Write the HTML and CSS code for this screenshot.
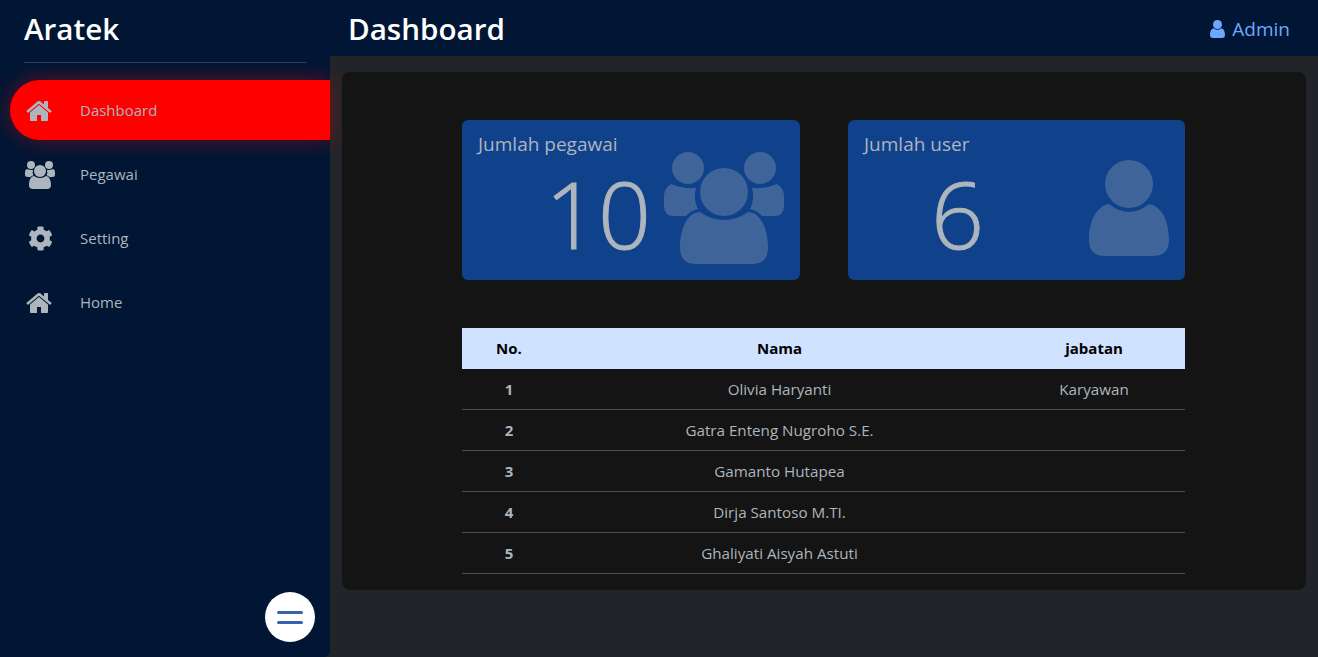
FILE: index.html

```html
<!DOCTYPE html>
<html>
<head>
    <title>Dashboard</title>
    <link rel="stylesheet" href="styles.css">
</head>
<body>
    <svg class="sprite" aria-hidden="true">
        <symbol id="i-home" viewBox="0 0 1792 1792">
            <path d="M1408 992v480q0 26-19 45t-45 19h-384v-384h-256v384h-384q-26 0-45-19t-19-45v-480q0-1 .5-3t.5-3l575-474 575 474q1 2 1 6zm223-69l-62 74q-8 9-21 11h-3q-13 0-21-7l-692-577-692 577q-12 8-24 7-13-2-21-11l-62-74q-8-10-7-23.500t11-21.500l719-599q32-26 76-26t76 26l244 204v-195q0-14 9-23t23-9h192q14 0 23 9t9 23v408l219 182q10 8 11 21.500t-7 23.500z"/>
        </symbol>
        <symbol id="i-cog" viewBox="0 0 512 512">
            <path d="M487.400 315.700l-42.600-24.600c4.300-23.200 4.300-47 0-70.200l42.600-24.600c4.900-2.800 7.100-8.600 5.500-14-11.100-35.600-30-67.800-54.700-94.600-3.800-4.100-10-5.100-14.800-2.300L380.800 110c-17.900-15.400-38.500-27.300-60.800-35.100V25.800c0-5.600-3.900-10.500-9.400-11.700-36.700-8.200-74.300-7.800-109.200 0-5.500 1.200-9.400 6.100-9.400 11.700V75c-22.200 7.900-42.800 19.800-60.800 35.100L88.700 85.500c-4.900-2.800-11-1.900-14.800 2.300-24.700 26.700-43.600 58.900-54.700 94.600-1.700 5.400.6 11.200 5.500 14L67.300 221c-4.300 23.200-4.300 47 0 70.200l-42.600 24.600c-4.900 2.800-7.100 8.600-5.500 14 11.100 35.600 30 67.800 54.700 94.600 3.800 4.100 10 5.100 14.800 2.300l42.600-24.600c17.900 15.400 38.500 27.300 60.800 35.100v49.200c0 5.600 3.900 10.500 9.400 11.700 36.700 8.200 74.300 7.800 109.200 0 5.500-1.200 9.400-6.100 9.400-11.700v-49.200c22.200-7.900 42.800-19.800 60.800-35.100l42.600 24.600c4.900 2.800 11 1.900 14.800-2.300 24.700-26.700 43.600-58.900 54.700-94.600 1.500-5.500-.7-11.300-5.600-14.100zM256 336c-44.100 0-80-35.900-80-80s35.900-80 80-80 80 35.900 80 80-35.900 80-80 80z"/>
        </symbol>
        <symbol id="i-users" viewBox="0 0 120 112">
            <circle cx="24" cy="16" r="16"/>
            <circle cx="96" cy="16" r="16"/>
            <circle cx="60" cy="40" r="24"/>
            <path d="M7 32Q18 37 32 36A28 28 0 0 0 34 57Q26 59 22 64L10 64Q0 64 0 54L0 44Q0 36 7 32Z"/>
            <path d="M113 32Q102 37 88 36A28 28 0 0 1 86 57Q94 59 98 64L110 64Q120 64 120 54L120 44Q120 36 113 32Z"/>
            <path d="M36 60Q47 68 60 68Q73 68 84 60C96 60 104 76 104 96Q104 112 88 112L32 112Q16 112 16 96C16 76 24 60 36 60Z"/>
        </symbol>
        <symbol id="i-user" viewBox="0 0 80 96">
            <circle cx="40" cy="24" r="24"/>
            <path d="M20 44Q30 52 40 52Q50 52 60 44C72 46 80 60 80 80Q80 96 64 96L16 96Q0 96 0 80C0 60 8 46 20 44Z"/>
        </symbol>
    </svg>

    <aside class="sidebar">
        <div class="brand">Aratek</div>
        <ul class="menu">
            <li class="menu-item active">
                <span class="menu-icon"><svg class="ic-home"><use href="#i-home"/></svg></span>
                <span>Dashboard</span>
            </li>
            <li class="menu-item">
                <span class="menu-icon"><svg class="ic-users"><use href="#i-users"/></svg></span>
                <span>Pegawai</span>
            </li>
            <li class="menu-item">
                <span class="menu-icon"><svg class="ic-cog"><use href="#i-cog"/></svg></span>
                <span>Setting</span>
            </li>
            <li class="menu-item">
                <span class="menu-icon"><svg class="ic-home"><use href="#i-home"/></svg></span>
                <span>Home</span>
            </li>
        </ul>
        <button class="toggle" type="button" aria-label="Menu">
            <span class="toggle-bar"></span>
            <span class="toggle-bar"></span>
        </button>
    </aside>

    <div class="main">
        <header class="topbar">
            <h1>Dashboard</h1>
            <div class="admin"><svg class="ic-admin"><use href="#i-user"/></svg>Admin</div>
        </header>
        <section class="panel">
            <div class="cards">
                <div class="card">
                    <div class="card-title">Jumlah pegawai</div>
                    <div class="card-number">10</div>
                    <svg class="card-icon icon-users"><use href="#i-users"/></svg>
                </div>
                <div class="card">
                    <div class="card-title">Jumlah user</div>
                    <div class="card-number">6</div>
                    <svg class="card-icon icon-user"><use href="#i-user"/></svg>
                </div>
            </div>
            <table class="staff">
                <colgroup>
                    <col class="col-no">
                    <col class="col-name">
                    <col>
                </colgroup>
                <thead>
                    <tr><th>No.</th><th>Nama</th><th>jabatan</th></tr>
                </thead>
                <tbody>
                    <tr><th>1</th><td>Olivia Haryanti</td><td>Karyawan</td></tr>
                    <tr><th>2</th><td>Gatra Enteng Nugroho S.E.</td><td></td></tr>
                    <tr><th>3</th><td>Gamanto Hutapea</td><td></td></tr>
                    <tr><th>4</th><td>Dirja Santoso M.TI.</td><td></td></tr>
                    <tr><th>5</th><td>Ghaliyati Aisyah Astuti</td><td></td></tr>
                </tbody>
            </table>
        </section>
    </div>
</body>
</html>
```

FILE: styles.css

```css
* {
	box-sizing: border-box;
}

body {
	margin: 0;
	height: 100vh;
	overflow: hidden;
	display: flex;
	background-color: #212529;
	color: #adb5bd;
	font-family: "Open Sans", "Noto Sans", sans-serif;
	font-size: 15px;
}

.sprite {
	display: none;
}

svg {
	fill: currentColor;
	display: block;
}

/* sidebar */
.sidebar {
	width: 330px;
	flex-shrink: 0;
	display: flex;
	flex-direction: column;
	background-color: #011634;
	border-bottom-right-radius: 6px;
}

.brand {
	height: 63px;
	width: 282px;
	margin: 0 24px;
	border-bottom: 1px solid #2f3f58;
	color: #fff;
	font-size: 29.600px;
	font-weight: 600;
	line-height: 58px;
}

.menu {
	list-style: none;
	margin: 17px 0 0 10px;
	padding: 0;
	display: flex;
	flex-direction: column;
	gap: 4px;
}

.menu-item {
	height: 60px;
	display: flex;
	align-items: center;
	gap: 10px;
}

.menu-item.active {
	background-color: #f00;
	border-radius: 30px 0 0 30px;
	box-shadow: 0 0 20px rgba(255, 0, 0, 0.4);
}

.menu-icon {
	width: 60px;
	display: flex;
	justify-content: center;
}

.ic-home {
	width: 28px;
	height: 28px;
	margin-top: 2px;
}

.ic-users {
	width: 30px;
	height: 28px;
	margin-top: 2px;
}

.ic-cog {
	width: 25px;
	height: 25px;
}

.toggle {
	margin: auto 15px 15px 0;
	align-self: flex-end;
	width: 50px;
	height: 50px;
	padding: 0;
	border: none;
	border-radius: 50%;
	background-color: #fff;
	display: flex;
	flex-direction: column;
	align-items: center;
	justify-content: center;
	gap: 7px;
}

.toggle-bar {
	width: 26px;
	height: 3px;
	border-radius: 2px;
	background-color: #3a62a8;
}

/* main area */
.main {
	flex: 1;
	display: flex;
	flex-direction: column;
}

.topbar {
	height: 56px;
	padding: 0 28px 0 18px;
	display: flex;
	align-items: center;
	justify-content: space-between;
	background-color: #011634;
}

.topbar h1 {
	margin: 0;
	color: #fff;
	font-size: 29.600px;
	font-weight: 600;
}

.admin {
	display: flex;
	align-items: center;
	gap: 7px;
	padding-top: 1px;
	color: #6ea8fe;
	font-size: 19px;
}

.ic-admin {
	width: 15px;
	height: 18px;
}

.panel {
	margin: 16px 12px 0;
	padding: 48px 121px 16px 120px;
	background-color: #141414;
	border-radius: 8px;
}

.cards {
	display: grid;
	grid-template-columns: 338px 337px;
	gap: 48px;
	margin-bottom: 48px;
}

.card {
	position: relative;
	height: 160px;
	padding: 11px 16px;
	background-color: #10418b;
	border-radius: 6px;
}

.card-title {
	font-size: 19px;
	line-height: 26px;
}

.card-number {
	margin: 1px 0 0 67px;
	font-size: 93px;
	font-weight: 300;
	line-height: 110px;
	-webkit-text-stroke: 1px #adb5bd;
}

.card-icon {
	position: absolute;
	opacity: 0.3;
}

.icon-users {
	right: 16px;
	top: 32px;
	width: 120px;
	height: 112px;
}

.icon-user {
	right: 16px;
	top: 40px;
	width: 80px;
	height: 96px;
}

/* table */
.staff {
	width: 100%;
	border-collapse: separate;
	border-spacing: 0;
	table-layout: fixed;
	text-align: center;
}

.staff td {
	font-size: 15.200px;
}

.col-no {
	width: 94px;
}

.col-name {
	width: 447px;
}

.staff th,
.staff td {
	height: 41px;
	padding: 0;
	border-bottom: 1px solid #495057;
}

.staff thead th {
	background-color: #cfe2ff;
	color: #000;
	border-bottom-color: #cfe2ff;
}
```
